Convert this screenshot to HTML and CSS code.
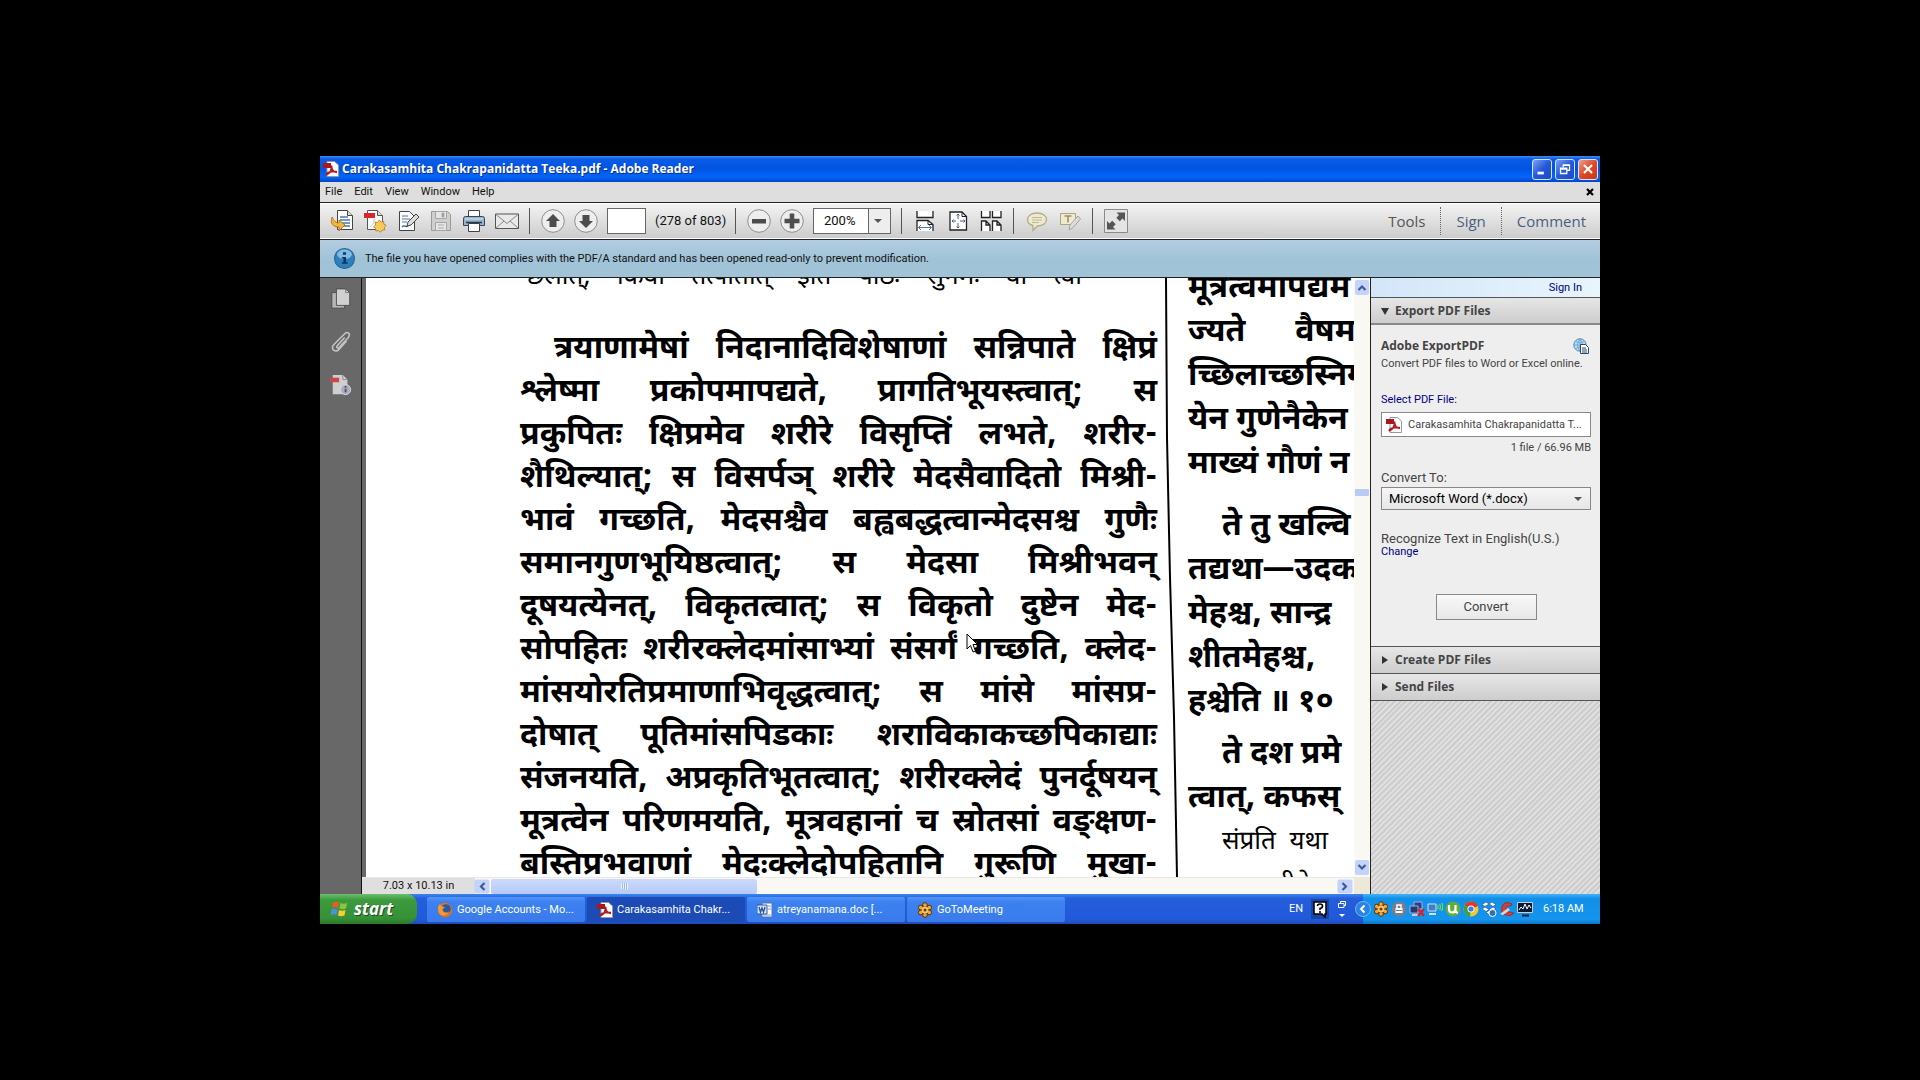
FILE: index.html
```html
<!DOCTYPE html>
<html>

<head lang="en">
    <meta charset="UTF-8">
    <title>Carakasamhita Chakrapanidatta Teeka.pdf - Adobe Reader</title>
    <link rel="stylesheet" href="styles.css">
</head>

<body>
<!-- shared icons -->
<svg class="defs" width="0" height="0">
    <symbol id="pdf" viewBox="0 0 16 16">
        <path d="M4 .5h7.5L15.500 4v11.500H4z" fill="#fff" stroke="#999"/>
        <path d="M0 2h8v5H0z" fill="#a8171d"/>
        <path d="M3 14c4-2 6-6 5.500-9.500M3 14c1-3 5-4 11-3.500M8.500 5c0 3 2 6 5.500 6.500" fill="none" stroke="#b3191f" stroke-width="1.700"/>
    </symbol>
    <symbol id="gtm" viewBox="0 0 16 16">
        <g fill="#f5a52c" stroke="#5b3206" stroke-width="1">
            <circle cx="8" cy="3" r="2.300"/><circle cx="12.300" cy="5.500" r="2.300"/><circle cx="12.300" cy="10.500" r="2.300"/>
            <circle cx="8" cy="13" r="2.300"/><circle cx="3.700" cy="10.500" r="2.300"/><circle cx="3.700" cy="5.500" r="2.300"/>
        </g>
        <circle cx="8" cy="8" r="3.500" fill="#f9c567"/>
        <circle cx="8" cy="8" r="1.500" fill="#6b3d0a"/>
    </symbol>
    <symbol id="chev" viewBox="0 0 14 14">
        <path d="M3.500 9L7 5.500 10.500 9" fill="none" stroke="#43598f" stroke-width="2.200"/>
    </symbol>
</svg>

<div class="desktop">
    <!-- title bar -->
    <header class="title-bar">
        <svg class="i16"><use href="#pdf"/></svg>
        <h1>Carakasamhita Chakrapanidatta Teeka.pdf - Adobe Reader</h1>
        <button class="win-btn" aria-label="Minimize"><svg viewBox="0 0 20 20"><path d="M5 13h7v3H5z" fill="#fff"/></svg></button>
        <button class="win-btn" aria-label="Restore"><svg viewBox="0 0 20 20"><path d="M8 8V5.500h7v6h-3M5 9h7v6H5zM5 10h7M8 6h7" fill="none" stroke="#fff" stroke-width="1.400"/></svg></button>
        <button class="win-btn close" aria-label="Close"><svg viewBox="0 0 20 20"><path d="M5.500 5.500l9 9M14.500 5.500l-9 9" stroke="#fff" stroke-width="2.300"/></svg></button>
    </header>

    <nav class="menu">
        <button>File</button>
        <button>Edit</button>
        <button>View</button>
        <button>Window</button>
        <button>Help</button>
        <button class="doc-close" aria-label="Close document"><svg viewBox="0 0 8 8"><path d="M1 1l6 6M7 1L1 7" stroke="#000" stroke-width="2.200"/></svg></button>
    </nav>

    <!-- toolbar -->
    <div class="toolbar">
        <button class="tool" aria-label="Open"><svg viewBox="0 0 24 24"><path d="M7.500 1.500h10l5 5v14h-15z" fill="#fff" stroke="#444"/><path d="M17.500 1.500v5h5" fill="#ddd" stroke="#444"/><path d="M10 8h8M10 11h10M10 14h10M12 17h8" stroke="#4b76a8" stroke-width="1.500"/><path d="M2 8c-2 7 1 10 7 10v4l6-6-6-5v3c-3 0-5-2-7-6z" fill="#f3b63c" stroke="#9c6a12" stroke-width=".8"/></svg></button>
        <button class="tool" aria-label="Create PDF"><svg viewBox="0 0 24 24"><path d="M4.500 1.500h10l5 5v14h-15z" fill="#fff" stroke="#555"/><path d="M14.500 1.500v5h5" fill="#ddd" stroke="#555"/><path d="M1 4h11v5H1z" fill="#d8262c"/><path d="M7 18c3-2 4-5 4-8 1 4 3 5 6 5" fill="none" stroke="#ccc"/><path d="M16.500 11l1.600 2.200 2.600-.8.100 2.700 2.400 1.300-2 1.900.7 2.600-2.700.2-1.700 2.200-2-1.800-2.600.6-.3-2.700-2.100-1.600 2-1.800-.5-2.600 2.600-.1z" fill="#f8ca5c" stroke="#a97a1e" stroke-width=".8"/></svg></button>
        <button class="tool" aria-label="Edit"><svg viewBox="0 0 24 24"><path d="M3.500 2.500h10l5 5v14h-15z" fill="#fff" stroke="#444"/><path d="M6 7h6M6 10h8M6 13h5" stroke="#8da4bd" stroke-width="1.500"/><path d="M6 18c3-3 3 1 6-1" fill="none" stroke="#3c5d86" stroke-width="1.300"/><path d="M11 17l1-4 8-8 3 3-8 8z" fill="#ddd" stroke="#444"/></svg></button>
        <button class="tool" aria-label="Save" disabled><svg viewBox="0 0 24 24"><path d="M2.500 2.500h16l3 3v16h-19z" fill="#cfcfcf" stroke="#9a9a9a"/><path d="M6.500 2.500h11v7h-11zM6.500 13.500h11v8h-11z" fill="#e6e6e6" stroke="#a5a5a5"/><path d="M13 4h2v4h-2zM9 16h6M9 19h6" fill="#999" stroke="#aaa"/></svg></button>
        <button class="tool" aria-label="Print"><svg viewBox="0 0 24 24"><path d="M6.500 1.500h11v8h-11z" fill="#fff" stroke="#444"/><path d="M1.500 9.500q0-2 2-2h17q2 0 2 2v7h-21z" fill="#98b3cc" stroke="#33475c"/><path d="M3 10h18" stroke="#dce8f2"/><path d="M6.500 14.500h11v8h-11z" fill="#fff" stroke="#444"/><path d="M4 13.500h16" stroke="#26384b" stroke-width="1.500"/></svg></button>
        <button class="tool" aria-label="Email"><svg viewBox="0 0 24 24"><path d="M.5 5h23v14.500H.5z" fill="#e9e9e9" stroke="#555"/><path d="M1 5.500l11 9 11-9M1 19l8-7M23 19l-8-7" fill="none" stroke="#888"/></svg></button>
        <i class="sep"></i>
        <button class="tool" aria-label="Previous page"><svg viewBox="0 0 24 24"><circle cx="12" cy="12" r="11.300" fill="#eee" stroke="#8d8d8d"/><path d="M12 5l7 7h-3.500v6h-7v-6H5z" fill="#4d4d4d"/></svg></button>
        <button class="tool" aria-label="Next page"><svg viewBox="0 0 24 24"><circle cx="12" cy="12" r="11.300" fill="#eee" stroke="#8d8d8d"/><path d="M12 19l7-7h-3.500V6h-7v6H5z" fill="#4d4d4d"/></svg></button>
        <input class="page-no" type="text" aria-label="Page number">
        <span class="page-count">(278 of 803)</span>
        <i class="sep"></i>
        <button class="tool" aria-label="Zoom out"><svg viewBox="0 0 24 24"><circle cx="12" cy="12" r="11.300" fill="#eee" stroke="#8d8d8d"/><path d="M5 10h14v4.500H5z" fill="#4d4d4d"/></svg></button>
        <button class="tool" aria-label="Zoom in"><svg viewBox="0 0 24 24"><circle cx="12" cy="12" r="11.300" fill="#eee" stroke="#8d8d8d"/><path d="M9.700 4.500h4.600v5.200h5.200v4.600h-5.200v5.200H9.700v-5.200H4.500V9.700h5.200z" fill="#4d4d4d"/></svg></button>
        <span class="drop zoom">
            <select aria-label="Zoom"><option>200%</option></select>
            <svg class="caret" viewBox="0 0 8 4"><path d="M0 0h8L4 4z"/></svg>
        </span>
        <i class="sep"></i>
        <button class="tool" aria-label="Fit width"><svg viewBox="0 0 24 24"><path d="M4 2v6.500h16V2" fill="#fff" stroke="#222" stroke-width="1.300"/><path d="M4 22V11.500h11l5 4V22" fill="#fff" stroke="#222" stroke-width="1.300"/><path d="M15 11.500v4h5" fill="none" stroke="#222"/><path d="M5.500 18.500h13M8 16l-2.500 2.500L8 21M16 16l2.500 2.500L16 21" fill="none" stroke="#54729c"/></svg></button>
        <button class="tool" aria-label="Fit page"><svg viewBox="0 0 24 24"><path d="M4 3h12l4.500 4.500V21H4z" fill="#fff" stroke="#222" stroke-width="1.300"/><path d="M16 3v4.500h4.500" fill="none" stroke="#222"/><path d="M12 5v5M12 14v5M6 12h4M14 12h5M10.500 6.500L12 5l1.500 1.500M10.500 17.500L12 19l1.500-1.500M7.500 10.500L6 12l1.500 1.500M17.500 10.500L19 12l-1.500 1.500" fill="none" stroke="#45638f"/></svg></button>
        <button class="tool" aria-label="Two pages"><svg viewBox="0 0 24 24"><path d="M2.500 2v6.500H11V2M13.500 2v6.500H22V2M2.500 22V12H7l4 4v6M13.500 22V12H18l4 4v6M7 12v4h4M18 12v4h4" fill="#fff" stroke="#222" stroke-width="1.300"/></svg></button>
        <i class="sep"></i>
        <button class="tool" aria-label="Sticky note"><svg viewBox="0 0 24 24"><path d="M12 4c6 0 9.500 3 9.500 6.500S18 17 12.500 17L8 21.500V16.500C4 15.500 2.500 13 2.500 10.500 2.500 7 6 4 12 4z" fill="#efe9cf" stroke="#b3ab8a" stroke-width="1.300"/><path d="M7 8.500h10M7 11h10M7 13.500h7" stroke="#bfb694"/></svg></button>
        <button class="tool" aria-label="Highlight text"><svg viewBox="0 0 24 24"><path d="M2.500 4.500h15v11h-15z" fill="#f1ebcd" stroke="#aaa489"/><path d="M6.500 7h7M10 7v6.500" stroke="#9a926d" stroke-width="1.600"/><path d="M11 21l1-5 8-9 2.500 3-8 9z" fill="#ddd" stroke="#a3a3a3"/></svg></button>
        <i class="sep"></i>
        <button class="tool" aria-label="Full screen"><svg viewBox="0 0 24 24"><path d="M.5.500h23v23H.5z" fill="#e4e4e4" stroke="#8a8a8a"/><path d="M12.500 3.500H21V12l-2.500-2.500-2.700 2.700-3.500-3.500L15 6zM11.500 20.500H3V12l2.500 2.500 2.700-2.700 3.500 3.500L9 18z" fill="#555"/></svg></button>
        <div class="panes">
            <button class="current">Tools</button>
            <button>Sign</button>
            <button>Comment</button>
        </div>
    </div>

    <div class="message">
        <svg viewBox="0 0 20 20"><circle cx="10" cy="10" r="9.500" fill="#2f7fbd" stroke="#2b6594"/><ellipse cx="10" cy="6" rx="7" ry="4.500" fill="#80bbe2"/><path d="M8.500 4h3v2.500h-3zM7.500 8.500h4v5H13V15H7.500v-1.500H9V10H7.500z" fill="#10375e"/></svg>
        <p>The file you have opened complies with the PDF/A standard and has been opened read-only to prevent modification.</p>
    </div>

    <main class="work">
        <!-- navigation strip -->
        <aside class="side">
            <button aria-label="Page thumbnails"><svg viewBox="0 0 24 24"><path d="M2 5h14v17H2z" fill="#b5b5b5" stroke="#4a4a4a"/><path d="M7 1h10l4.500 4v14H7z" fill="#d0d0d0" stroke="#4a4a4a"/><path d="M17 1v4h4.500" fill="none" stroke="#777"/></svg></button>
            <button aria-label="Attachments"><svg viewBox="0 0 24 24"><path d="M16 7l-8 9c-1.500 2 .5 3.500 2 2L20 7c3-4-1-7-4-4L4 15c-4 5 2 9 6 5l8-9" fill="none" stroke="#c4c4c4" stroke-width="1.700"/></svg></button>
            <button aria-label="Standards"><svg viewBox="0 0 24 24"><path d="M3 1h11l5 5v16H3z" fill="#cfcfcf"/><path d="M14 1v5h5" fill="none" stroke="#888"/><path d="M0 4h10v5H0z" fill="#c9484c"/><circle cx="17" cy="17" r="5.500" fill="#a9adbb" stroke="#dcdce4"/><path d="M17 13v2M17 16v4" stroke="#4e5468" stroke-width="2"/></svg></button>
        </aside>

        <section class="viewer">
            <article class="sheet" lang="sa">
                <div class="column">
                    <p class="note cut">छलात्, किंवा तत्पातात् इति पाठः सुगमः वा त्वा</p>
                    <p class="indent">त्रयाणामेषां निदानादिविशेषाणां सन्निपाते क्षिप्रं</p>
                    <p>श्लेष्मा प्रकोपमापद्यते, प्रागतिभूयस्त्वात्; स</p>
                    <p>प्रकुपितः क्षिप्रमेव शरीरे विसृप्तिं लभते, शरीर-</p>
                    <p>शैथिल्यात्; स विसर्पञ् शरीरे मेदसैवादितो मिश्री-</p>
                    <p>भावं गच्छति, मेदसश्चैव बह्वबद्धत्वान्मेदसश्च गुणैः</p>
                    <p>समानगुणभूयिष्ठत्वात्; स मेदसा मिश्रीभवन्</p>
                    <p>दूषयत्येनत्, विकृतत्वात्; स विकृतो दुष्टेन मेद-</p>
                    <p>सोपहितः शरीरक्लेदमांसाभ्यां संसर्गं गच्छति, क्लेद-</p>
                    <p>मांसयोरतिप्रमाणाभिवृद्धत्वात्; स मांसे मांसप्र-</p>
                    <p>दोषात् पूतिमांसपिडकाः शराविकाकच्छपिकाद्याः</p>
                    <p>संजनयति, अप्रकृतिभूतत्वात्; शरीरक्लेदं पुनर्दूषयन्</p>
                    <p>मूत्रत्वेन परिणमयति, मूत्रवहानां च स्रोतसां वङ्क्षण-</p>
                    <p>बस्तिप्रभवाणां मेदःक्लेदोपहितानि गुरूणि मुखा-</p>
                </div>
                <svg class="rule" viewBox="0 0 14 600" preserveAspectRatio="none"><path d="M1 0L2 160 5 300 9 440 12 600" fill="none" stroke="#000" stroke-width="2"/></svg>
                <div class="column next">
                    <p>मूत्रत्वमापद्यम</p>
                    <p>ज्यते &nbsp; &nbsp; &nbsp;वैषम</p>
                    <p>च्छिलाच्छस्निग्</p>
                    <p>येन गुणेनैकेन</p>
                    <p>माख्यं गौणं न</p>
                    <p class="indent para">ते तु खल्वि</p>
                    <p>तद्यथा—उदकमे</p>
                    <p>मेहश्च, सान्द्र</p>
                    <p>शीतमेहश्च,</p>
                    <p>हश्चेति ॥ १०</p>
                    <p class="indent last">ते दश प्रमे</p>
                    <p>त्वात्, कफस्</p>
                    <p class="indent note">संप्रति &nbsp;यथा</p>
                    <p class="note">साधु &nbsp; &nbsp;समीयेत्</p>
                </div>
                <svg class="cursor" viewBox="0 0 12 20"><path d="M1 1v15l3.500-3.500L7 19l2.500-1L7 11.500h4.500z" fill="#fff" stroke="#000"/></svg>
            </article>
            <div class="v-scroll">
                <button aria-label="Scroll up"><svg><use href="#chev"/></svg></button>
                <i class="thumb"></i>
                <button class="down" aria-label="Scroll down"><svg><use href="#chev"/></svg></button>
            </div>
            <div class="h-scroll">
                <span class="size">7.03 x 10.13 in</span>
                <button class="left" aria-label="Scroll left"><svg><use href="#chev"/></svg></button>
                <i class="thumb"><b></b></i>
                <button class="right" aria-label="Scroll right"><svg><use href="#chev"/></svg></button>
            </div>
            <div class="corner"></div>
        </section>

        <!-- tools pane -->
        <aside class="pane">
            <div class="sign-in"><a href="#">Sign In</a></div>
            <h2 class="open"><svg viewBox="0 0 8 8"><path d="M0 1h8L4 8z"/></svg>Export PDF Files</h2>
            <form class="export">
                <div class="name">
                    <h3>Adobe ExportPDF</h3>
                    <svg viewBox="0 0 16 16"><circle cx="7" cy="7" r="6.200" fill="#b9dcf2" stroke="#4d86b5"/><path d="M1 7h12M7 1v12M2.500 3.500q4.500 3 9 0M2.500 10.500q4.500-3 9 0M7 1q-5 6 0 12M7 1q5 6 0 12" fill="none" stroke="#6aa2cb" stroke-width=".8"/><path d="M7.500 6.500h5l3 3v6h-8z" fill="#fff" stroke="#2b4a6d"/><path d="M9 10h4M9 12h5M9 14h5" stroke="#2b4a6d"/></svg>
                </div>
                <p>Convert PDF files to Word or Excel online.</p>
                <label class="link" for="file">Select PDF File:</label>
                <div class="file">
                    <svg class="i16"><use href="#pdf"/></svg>
                    <input id="file" type="text" value="Carakasamhita Chakrapanidatta T..." readonly>
                </div>
                <p class="total">1 file / 66.96 MB</p>
                <label for="format">Convert To:</label>
                <span class="drop format">
                    <select id="format"><option>Microsoft Word (*.docx)</option></select>
                    <svg class="caret" viewBox="0 0 8 4"><path d="M0 0h8L4 4z"/></svg>
                </span>
                <p class="ocr">Recognize Text in English(U.S.)</p>
                <a class="link" href="#">Change</a>
                <button class="convert" type="button">Convert</button>
            </form>
            <h2><svg viewBox="0 0 8 8"><path d="M1 0v8l6-4z"/></svg>Create PDF Files</h2>
            <h2><svg viewBox="0 0 8 8"><path d="M1 0v8l6-4z"/></svg>Send Files</h2>
            <div class="hatch"></div>
        </aside>
    </main>

    <footer class="taskbar">
        <button class="start">
            <svg viewBox="0 0 20 20"><path d="M3 4q3-2 6-.5L8 9Q5 7.500 2 9z" fill="#ee5a24"/><path d="M10.500 4q3 1.500 6.500 0l-1 5.500q-3.500 1.500-6.500 0z" fill="#8cc63f"/><path d="M1.500 10.500q3-1.500 6 0L6.500 16q-3-1.500-6 0z" fill="#4b8fe8"/><path d="M9 11q3 1.500 6.500 0l-1 5.500q-3.500 1.500-6.500 0z" fill="#f9cd2f"/></svg>
            start
        </button>
        <div class="tasks">
            <button><svg viewBox="0 0 16 16"><circle cx="8" cy="8" r="7.200" fill="#e8701a"/><circle cx="9" cy="7" r="4.800" fill="#2d5a9e"/><path d="M1 5c1-2 2-3 2-3l1 2c2 0 3 1 4 2-2 0-3 1-2 3 2 2 5 2 6 0 0 4-6 6-9 3C1 10 1 7 1 5z" fill="#f39a2b"/></svg><span>Google Accounts - Mo...</span></button>
            <button class="current"><svg><use href="#pdf"/></svg><span>Carakasamhita Chakr...</span></button>
            <button><svg viewBox="0 0 16 16"><path d="M5 1h10v14H5z" fill="#fff" stroke="#5873a8"/><path d="M11 4h3M11 7h3M6 13h8" stroke="#7c96c8"/><path d="M0 3h10v9H0z" fill="#d9e5fa" stroke="#2b569c"/><path d="M2 5l1.500 5L5 6l1.500 4L8 5" fill="none" stroke="#2b569c" stroke-width="1.400"/></svg><span>atreyanamana.doc [...</span></button>
            <button><svg><use href="#gtm"/></svg><span>GoToMeeting</span></button>
        </div>
        <div class="lang">
            <span>EN</span>
            <svg class="help" viewBox="0 0 18 20"><path d="M3 3h12v12h-1v3l-3-3H3z" fill="#fff" stroke="#000" stroke-width="1.500"/><path d="M6.500 7q0-2 2.500-2t2.500 2T9 9.500V11M9 12v2" fill="none" stroke="#000" stroke-width="1.600"/></svg>
            <svg class="bar" viewBox="0 0 10 18"><path d="M3.500 3V1.500h5v4H7M1.500 3.500H7v4H1.500z" fill="none" stroke="#fff"/><path d="M2 14h6l-3 3z" fill="#fff"/></svg>
        </div>
        <div class="tray">
            <button class="expand" aria-label="Show hidden icons"><svg viewBox="0 0 16 16"><circle cx="8" cy="8" r="7.500" fill="#2c83e6" stroke="#6fb6f8"/><path d="M9.500 4.500L6 8l3.500 3.500" fill="none" stroke="#fff" stroke-width="2"/></svg></button>
            <svg><use href="#gtm"/></svg>
            <svg viewBox="0 0 16 16"><circle cx="8" cy="8" r="7.500" fill="#76808c"/><path d="M4.500 7h7v5h-7z" fill="#fff"/><path d="M6 7V4h4v3" fill="none" stroke="#fff" stroke-width="1.500"/><path d="M5 9.500h6" stroke="#76808c"/></svg>
            <svg viewBox="0 0 16 16"><path d="M5 1h8v7H5z" fill="#2d3f86" stroke="#9fb0dc"/><path d="M1 5h8v7H1z" fill="#273872" stroke="#9fb0dc"/><path d="M3 14h6" stroke="#ccc" stroke-width="2"/><path d="M9 8l6 7M15 8l-6 7" stroke="#e01f1f" stroke-width="2.200"/></svg>
            <svg viewBox="0 0 16 16"><path d="M1 3h8v7H1z" fill="#3f7fc9" stroke="#cfe0f5"/><path d="M2 13h7" stroke="#cfe0f5" stroke-width="2"/><path d="M10.500 4q1.500 2 0 4M12.500 3q2 3 0 6M14.500 2q2.500 4 0 8" fill="none" stroke="#6fe04a" stroke-width="1.200"/></svg>
            <svg viewBox="0 0 16 16"><circle cx="8" cy="8" r="7.500" fill="#5fae3a"/><path d="M4 4v4q0 3.500 3 3.500T10.500 8V4M10.500 9q0 3 2.500 2.500" fill="none" stroke="#fff" stroke-width="2.200"/></svg>
            <svg viewBox="0 0 16 16"><circle cx="8" cy="8" r="7.500" fill="#f3c72c"/><path d="M8 8L1.500 4.500A7.500 7.500 0 0 1 15 5z" fill="#db3b2b"/><path d="M8 8L1.500 4.500A7.500 7.500 0 0 0 7 15.500z" fill="#35a14c"/><circle cx="8" cy="8" r="3.500" fill="#fff"/><circle cx="8" cy="8" r="2.600" fill="#3c7be0"/></svg>
            <svg viewBox="0 0 16 16"><path d="M5 1l3 2-4 2.500L1 3.500zM11 1L8 3l4 2.500 3-2zM1 8l3-2 4 2.500-3 2zM15 8l-3-2-4 2.500 3 2zM5 11.500L8 9.500l3 2-3 2z" fill="#fff" stroke="#1c4c87" stroke-width=".6"/><circle cx="11.500" cy="12" r="3.500" fill="#2e6fc4" stroke="#fff"/></svg>
            <svg viewBox="0 0 16 16"><path d="M13 3Q5-1 3 6t4 8q5 2 8-2l-4-1q-4 1-4-3t5-3z" fill="#d6402f" stroke="#8c1c14" stroke-width=".6"/><path d="M1 13l8-6 2 2-7 5z" fill="#d6d6d6"/></svg>
            <svg viewBox="0 0 16 16"><path d="M.5 1.500h15v10H.5z" fill="#0d1a33" stroke="#c6d0dd"/><path d="M2 9l2-3 2 2 2-5 2 5 2-4 2 3" fill="none" stroke="#fff"/><path d="M5 14.500h7" stroke="#101c30" stroke-width="2"/></svg>
            <time>6:18 AM</time>
        </div>
    </footer>
</div>
</body>

</html>
```
FILE: styles.css
```css
* {
    box-sizing: border-box;
    padding: 0;
    margin: 0;
}

body {
    display: flex;
    height: 100vh;
    padding: 156px 320px;
    background-color: #000;
    color: #111;
    font-family: Tahoma, Roboto, sans-serif;
    font-size: 11px;
    line-height: 14px;
}

h1, h2, h3, .panes, .start {
    font-family: Tahoma, "Open Sans", sans-serif;
}

a {
    color: #000080;
    text-decoration: none;
}

button, input, select {
    border: 0;
    background: none;
    color: inherit;
    font: inherit;
}

svg {
    display: block;
    flex: none;
}

.defs {
    position: absolute;
}

.i16 {
    width: 16px;
    height: 16px;
}

.desktop {
    display: flex;
    flex: 1;
    flex-direction: column;
    min-width: 0;
    overflow: hidden;
}

/* title bar */
.title-bar {
    display: flex;
    flex: none;
    align-items: center;
    gap: 3px;
    height: 26px;
    padding: 0 2px 0 3px;
    background: linear-gradient(#3c8cf5, #0a5ce8 12%, #0054e0 50%, #0566fc 80%, #0046c8);
    color: #fff;
}

.title-bar h1 {
    flex: 1;
    font-size: 12px;
    text-shadow: 1px 1px #0a2f8a;
}

.win-btn {
    width: 20px;
    height: 21px;
    border: 1px solid #d5e2fb;
    border-radius: 3px;
    background: linear-gradient(135deg, #7ba2f2, #2659d8 50%, #1c4cc6);
}

.win-btn.close {
    background: linear-gradient(135deg, #f0a08c, #dc4a26 50%, #c43812);
}

/* menu */
.menu {
    display: flex;
    flex: none;
    align-items: center;
    gap: 12px;
    height: 20px;
    padding: 0 6px 0 5px;
    background-color: #dedede;
}

.doc-close {
    width: 8px;
    height: 8px;
    margin-left: auto;
}

/* toolbar */
.toolbar {
    display: flex;
    flex: none;
    align-items: center;
    gap: 9px;
    height: 38px;
    padding: 0 10px;
    border-top: 1px solid #222;
    border-bottom: 1px solid #222;
    background: linear-gradient(#f4f4f4, #cbcbcb);
    box-shadow: inset 0 1px #fff, inset 0 -1px #fff;
}

.tool {
    width: 24px;
    height: 24px;
}

.sep {
    width: 1px;
    height: 26px;
    margin: 0 2px 0 1px;
    background-color: #555;
}

.page-no {
    width: 39px;
    height: 26px;
    border: 1px solid #666;
    background-color: #fff;
    text-align: center;
}

.page-count {
    width: 70px;
    font-size: 13px;
    white-space: nowrap;
}

.drop {
    position: relative;
    display: block;
}

.drop select {
    width: 100%;
    height: 100%;
    appearance: none;
}

.caret {
    position: absolute;
    top: 50%;
    right: 8px;
    width: 8px;
    height: 4px;
    margin-top: -2px;
    fill: #555;
    pointer-events: none;
}

.zoom {
    width: 78px;
    height: 26px;
    border: 1px solid #666;
    background: linear-gradient(90deg, #fff 54px, #666 54px, #666 55px, #eee 55px);
}

.zoom select {
    padding-left: 10px;
    font-size: 13px;
}

.panes {
    display: flex;
    margin-left: auto;
}

.panes button {
    height: 28px;
    padding: 0 15px;
    border-left: 1px dotted #666;
    color: #4a5f80;
    font-size: 15px;
}

.panes button:last-child {
    padding-right: 4px;
}

.panes .current {
    border-left: 0;
    color: #555;
}

.message {
    display: flex;
    flex: none;
    align-items: center;
    gap: 10px;
    height: 37px;
    padding: 0 14px;
    background: linear-gradient(#b3cde2, #a1c3d7 50%);
}

.message svg {
    width: 21px;
    height: 21px;
}

/* work area */
.work {
    display: flex;
    flex: 1;
    min-height: 0;
    border-top: 1px solid #222;
}

.side {
    display: flex;
    flex: none;
    flex-direction: column;
    align-items: center;
    gap: 20px;
    width: 42px;
    padding-top: 9px;
    border-right: 1px solid #111;
    background-color: #686868;
}

.side button {
    width: 22px;
    height: 23px;
}

.viewer {
    display: grid;
    flex: 1;
    grid-template-columns: minmax(0, 1fr) 16px;
    grid-template-rows: minmax(0, 1fr) 17px;
    min-width: 0;
}

.sheet {
    position: relative;
    display: flex;
    padding-left: 154px;
    border-left: 4px solid #686868;
    background-color: #fff;
    color: #000;
    font-family: "Noto Sans Devanagari", "Noto Sans", "Lohit Devanagari", sans-serif;
    font-size: 32px;
    font-weight: bold;
    line-height: 43px;
    overflow: hidden;
}

.column {
    flex: none;
    width: 637px;
}

.column p {
    text-align-last: justify;
    white-space: nowrap;
}

.column .note {
    font-size: 26px;
    font-weight: normal;
}

.column .cut {
    height: 51px;
    margin: 0 75px 0 6px;
    line-height: 1px;
}

.column .indent {
    padding-left: 34px;
}

.rule {
    flex: none;
    width: 14px;
    height: 100%;
    margin: 0 9px 0 8px;
}

.next {
    line-height: 44px;
}

.next p {
    text-align-last: left;
}

.next p:first-child {
    margin-top: -11px;
}

.next .para {
    margin-top: 18px;
}

.next .last {
    margin-top: 8px;
}

.cursor {
    position: absolute;
    top: 355px;
    left: 600px;
    width: 12px;
    height: 20px;
}

/* scroll bars */
.v-scroll, .h-scroll {
    display: flex;
    background-color: #f9f8f3;
}

.v-scroll {
    flex-direction: column;
    align-items: center;
    padding: 2px 0;
}

.v-scroll button, .h-scroll button {
    width: 14px;
    height: 15px;
    border-radius: 2px;
    background-color: #c3d3fb;
}

.v-scroll svg, .h-scroll svg {
    width: 14px;
    height: 14px;
}

.v-scroll .thumb {
    width: 14px;
    height: 7px;
    margin-top: 194px;
    border-radius: 1px;
    background-color: #b9cbf5;
}

.v-scroll .down {
    margin-top: auto;
    transform: rotate(180deg);
}

.h-scroll {
    align-items: center;
    border-top: 1px solid #e8e8e8;
    padding-right: 2px;
}

.size {
    width: 113px;
    height: 16px;
    background-color: #dfdfdf;
    text-align: center;
    line-height: 16px;
}

.left {
    transform: rotate(-90deg);
}

.right {
    margin-left: auto;
    transform: rotate(90deg);
}

.h-scroll .thumb {
    display: flex;
    justify-content: center;
    align-items: center;
    width: 266px;
    height: 15px;
    margin-left: 2px;
    border-radius: 2px;
    background: linear-gradient(#cbdafd, #b6c9f7);
}

.h-scroll b {
    width: 7px;
    height: 6px;
    background: repeating-linear-gradient(90deg, #eef4fe 0 1px, #9fb5ea 1px 2px);
}

.corner {
    background-color: #ece9d8;
}

/* tools pane */
.pane {
    display: flex;
    flex: none;
    flex-direction: column;
    width: 230px;
    border-left: 1px solid #222;
    background-color: #eee;
    color: #444;
}

.sign-in {
    height: 19px;
    padding-right: 18px;
    background: linear-gradient(90deg, #d3e6f8, #e8f5fd);
    text-align: right;
    line-height: 19px;
}

.pane h2 {
    display: flex;
    align-items: center;
    gap: 6px;
    height: 27px;
    padding-left: 10px;
    border-top: 1px solid #555;
    background: linear-gradient(#e6e6e6, #cdcdcd);
    font-size: 12px;
}

.pane h2 svg {
    width: 8px;
    height: 8px;
    fill: #333;
}

.pane .open {
    height: 28px;
    border-bottom: 2px solid #888;
}

.export {
    display: flex;
    flex-direction: column;
    height: 321px;
    padding: 12px 9px 0 10px;
}

.name {
    display: flex;
    justify-content: space-between;
    align-items: center;
    height: 18px;
    padding-right: 2px;
}

.name svg {
    width: 16px;
    height: 16px;
}

.export h3 {
    font-size: 12px;
}

.export p {
    margin-top: 2px;
}

.link {
    color: #000080;
}

.export label {
    margin-top: 22px;
}

.file {
    display: flex;
    align-items: center;
    gap: 6px;
    height: 25px;
    margin-top: 5px;
    padding: 0 4px;
    border: 1px solid #888;
    background-color: #fff;
}

.file input {
    flex: 1;
    min-width: 0;
}

.export .total {
    margin-top: 4px;
    text-align: right;
}

.total + label {
    margin-top: 16px;
    font-size: 13px;
}

.format {
    height: 23px;
    margin-top: 2px;
    border: 1px solid #888;
    background: linear-gradient(#f6f6f6, #e6e6e6);
    color: #000;
}

.format select {
    padding-left: 7px;
    font-size: 13px;
}

.export .ocr {
    margin-top: 22px;
    font-size: 13px;
}

.export a {
    line-height: 12px;
}

.convert {
    align-self: center;
    width: 101px;
    height: 26px;
    margin-top: 36px;
    border: 1px solid #888;
    background: linear-gradient(#f8f8f8, #e8e8e8);
    font-size: 13px;
}

.hatch {
    flex: 1;
    border-top: 1px solid #555;
    background: repeating-linear-gradient(135deg, #cdcdcd 0 2px, #dfdfdf 2px 4px);
}

/* taskbar */
.taskbar {
    display: flex;
    flex: none;
    height: 30px;
    background: linear-gradient(#3a86f2, #245edb 15%, #2159d8 85%, #1c4bb8);
    color: #fff;
}

.start {
    display: flex;
    align-items: center;
    gap: 4px;
    width: 97px;
    padding-left: 10px;
    border-radius: 0 10px 10px 0;
    background: linear-gradient(#6cbf6c, #3c9a3c 20%, #379137 80%, #2a7a2a);
    font-size: 17px;
    font-style: italic;
    font-weight: bold;
    text-shadow: 1px 1px #1d4d1d;
}

.start svg {
    width: 20px;
    height: 20px;
}

.tasks {
    display: flex;
    gap: 2px;
    padding: 3px 0 2px 10px;
}

.tasks button {
    display: flex;
    align-items: center;
    gap: 4px;
    width: 158px;
    padding: 0 10px;
    border-radius: 2px;
    background: linear-gradient(#5494f8, #3c81f0 20%, #3a7bea);
    white-space: nowrap;
}

.tasks .current {
    background: #1c4bb5;
}

.tasks svg {
    width: 16px;
    height: 16px;
}

.lang {
    display: flex;
    align-items: center;
    gap: 8px;
    margin-left: auto;
    padding-right: 16px;
}

.help {
    width: 18px;
    height: 20px;
    background-color: #1846a8;
}

.bar {
    width: 10px;
    height: 18px;
}

.tray {
    display: flex;
    align-items: center;
    gap: 2px;
    width: 237px;
    background: linear-gradient(#3cb4f8, #1290e9 15%, #1594ee 85%, #0f74c4);
}

.tray svg {
    width: 16px;
    height: 16px;
}

.expand {
    margin-left: -8px;
}

.tray time {
    margin-left: 8px;
}
```
